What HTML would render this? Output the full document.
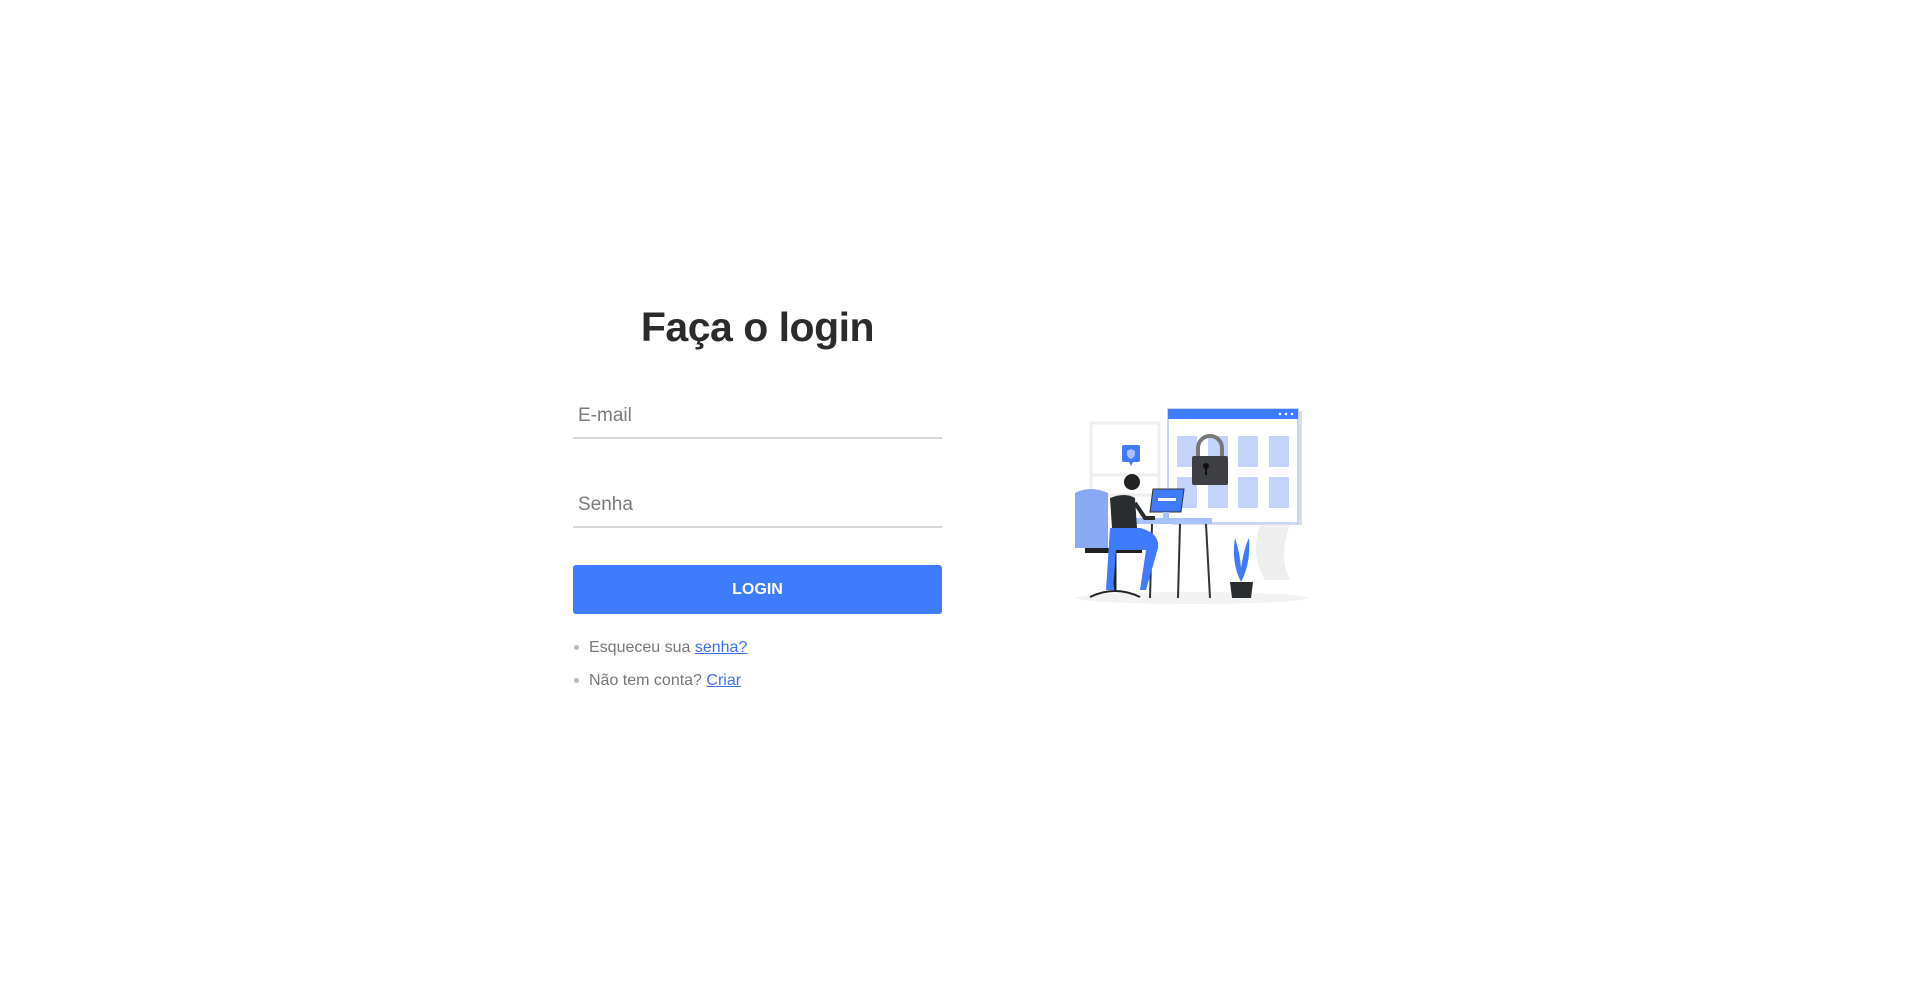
<!DOCTYPE html>
<html><head><meta charset="utf-8"><style>
html,body{margin:0;padding:0;background:#fff;width:1912px;height:995px;overflow:hidden;font-family:"Liberation Sans",sans-serif}
.t{position:absolute;left:573px;width:369px;text-align:center;top:304px;font-size:41px;font-weight:bold;color:#2b2b2b;letter-spacing:-0.5px}
.in{position:absolute;left:573px;width:369px;border-bottom:2px solid #d6d6d6;color:#7b7b7b;font-size:19px}
.in span{position:absolute;left:5px;top:10px}
.btn{position:absolute;left:573px;top:565px;width:369px;height:49px;background:#3f7bfd;border-radius:3px;color:#fff;font-size:16px;font-weight:bold;text-align:center;line-height:49px}
.l{position:absolute;left:574px;font-size:16px;color:#777}
.l i{display:inline-block;width:5px;height:5px;border-radius:50%;background:#bbb;vertical-align:middle;margin-right:10px}
.l a{color:#3f6fef;text-decoration:underline}
</style></head><body>
<div class="t">Faça o login</div>
<div class="in" style="top:395px;height:42px"><span>E-mail</span></div>
<div class="in" style="top:484px;height:42px"><span>Senha</span></div>
<div class="btn">LOGIN</div>
<div class="l" style="top:639px"><i></i>Esqueceu sua <a>senha?</a></div>
<div class="l" style="top:672px"><i></i>Não tem conta? <a>Criar</a></div>
<svg style="position:absolute;left:1060px;top:385px" width="280" height="235" viewBox="0 0 280 235">
<ellipse cx="132" cy="213" rx="116" ry="6" fill="#f2f2f2"/>
<rect x="31" y="38" width="68" height="52" fill="none" stroke="#eee" stroke-width="3"/>
<rect x="31" y="90" width="68" height="20" fill="none" stroke="#eee" stroke-width="3"/>
<path d="M200 140 q-10 30 5 55 h25 q-12-25 0-55z" fill="#eee"/>
<rect x="112" y="26" width="130" height="114" fill="#ddd"/>
<rect x="108" y="24" width="130" height="114" fill="#fff" stroke="#c6d6fb" stroke-width="2"/>
<rect x="108" y="24" width="130" height="10" fill="#3f7bfd"/>
<circle cx="220" cy="29" r="1.3" fill="#fff"/><circle cx="226" cy="29" r="1.3" fill="#fff"/><circle cx="232" cy="29" r="1.3" fill="#fff"/>
<g fill="#c4d4fb">
<rect x="117" y="51" width="20" height="31"/><rect x="148" y="51" width="20" height="31"/><rect x="178" y="51" width="20" height="31"/><rect x="209" y="51" width="20" height="31"/>
<rect x="117" y="92" width="20" height="31"/><rect x="148" y="92" width="20" height="31"/><rect x="178" y="92" width="20" height="31"/><rect x="209" y="92" width="20" height="31"/>
</g>
<path d="M138 71 v-8 a12 12 0 0 1 24 0 v8" fill="none" stroke="#777" stroke-width="4"/>
<rect x="132" y="71" width="36" height="29" rx="2" fill="#3d3f42"/>
<circle cx="146" cy="81" r="3" fill="#111"/><rect x="145" y="82" width="2" height="8" fill="#111"/>
<rect x="62" y="60" width="18" height="17" rx="2" fill="#3f7bfd"/>
<path d="M71 64 l4 2 v3 q0 3-4 5 q-4-2-4-5 v-3z" fill="#a9c2fd"/>
<path d="M69 77 l2 4 l2-4z" fill="#3f7bfd"/>
<rect x="67" y="133" width="85" height="6" fill="#a9c2fd"/>
<line x1="92" y1="139" x2="90" y2="213" stroke="#333" stroke-width="2"/>
<line x1="120" y1="139" x2="118" y2="213" stroke="#333" stroke-width="2"/>
<line x1="146" y1="139" x2="150" y2="213" stroke="#333" stroke-width="2"/>
<path d="M93 104 h31 l-3 23 h-31z" fill="#3f7bfd" stroke="#333" stroke-width="1"/>
<rect x="98" y="113" width="18" height="3" fill="#fff"/>
<rect x="103" y="127" width="6" height="7" fill="#a9c2fd"/>
<path d="M15 108 q15-8 33 0 v55 h-33z" fill="#8aa9f5"/>
<rect x="25" y="163" width="57" height="5" fill="#222"/>
<line x1="55" y1="168" x2="55" y2="205" stroke="#222" stroke-width="3"/>
<path d="M30 212 q25-12 50 0" fill="none" stroke="#222" stroke-width="2"/>
<circle cx="72" cy="97" r="8" fill="#222"/>
<path d="M50 113 q15-6 25 0 l2 30 h-25z" fill="#2a2d30"/>
<path d="M75 118 l10 15 h10" fill="none" stroke="#2a2d30" stroke-width="4"/>
<path d="M50 143 h30 q20 5 18 20 l-12 42 h-6 l6-40 h-30 l-3 40 h-7z" fill="#3f7bfd"/>
<path d="M170 197 h23 l-2 16 h-19z" fill="#2a2d30"/>
<path d="M181 197 q-10-20-6-44 q5 15 6 30 q3-20 8-30 q2 25-8 44z" fill="#3f7bfd"/>
</svg>
</body></html>
